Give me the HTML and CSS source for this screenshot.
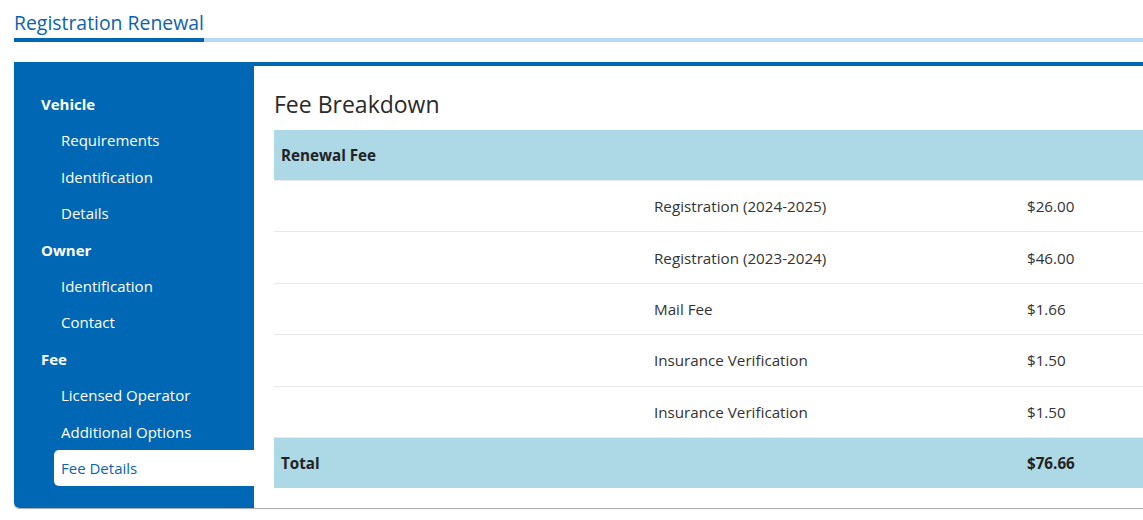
FILE: index.html
```html
<!DOCTYPE html>
<html lang="en">
<head>
<meta charset="utf-8">
<title>Registration Renewal</title>
<link rel="stylesheet" href="styles.css">
</head>
<body>
<div class="page-title">
  <h1 class="title">Registration Renewal</h1>
</div>
<div class="card">
  <nav class="sidebar">
    <ul class="nav">
      <li class="nav-group">Vehicle</li>
      <li class="nav-item">Requirements</li>
      <li class="nav-item">Identification</li>
      <li class="nav-item">Details</li>
      <li class="nav-group">Owner</li>
      <li class="nav-item">Identification</li>
      <li class="nav-item">Contact</li>
      <li class="nav-group">Fee</li>
      <li class="nav-item">Licensed Operator</li>
      <li class="nav-item">Additional Options</li>
      <li class="nav-item active">Fee Details</li>
    </ul>
  </nav>
  <main class="content">
    <h2 class="heading">Fee Breakdown</h2>
    <table class="fees">
      <colgroup><col class="c1"><col class="c2"><col class="c3"></colgroup>
      <thead>
        <tr class="head-row"><th>Renewal Fee</th><th></th><th></th></tr>
      </thead>
      <tbody>
        <tr><td></td><td>Registration (2024-2025)</td><td>$26.00</td></tr>
        <tr><td></td><td>Registration (2023-2024)</td><td>$46.00</td></tr>
        <tr><td></td><td>Mail Fee</td><td>$1.66</td></tr>
        <tr><td></td><td>Insurance Verification</td><td>$1.50</td></tr>
        <tr><td></td><td>Insurance Verification</td><td>$1.50</td></tr>
      </tbody>
      <tfoot>
        <tr class="total-row"><th>Total</th><th></th><th>$76.66</th></tr>
      </tfoot>
    </table>
  </main>
</div>
</body>
</html>
```
FILE: styles.css
```css
html, body {
  margin: 0;
  padding: 0;
  overflow: hidden;
  background: #fff;
}
body {
  font-family: "Open Sans", "Noto Sans", sans-serif;
  color: #333;
  width: 1143px;
  height: 520px;
}
.page-title {
  margin-left: 14px;
  padding-top: 10px;
  border-bottom: 4px solid #b8d8f8;
}
.title {
  display: inline-block;
  margin: 0 0 -4px 0;
  font-size: 19.4px;
  font-weight: 400;
  line-height: 26px;
  padding-bottom: 2px;
  width: 190px;
  white-space: nowrap;
  color: #0a63b1;
  border-bottom: 4px solid #0067b4;
}
.card {
  margin: 20px 0 0 14px;
  width: 1129px;
  height: 442px;
  overflow: hidden;
  border-top: 4px solid #0067b4;
  display: grid;
  grid-template-columns: 240px 1fr;
  box-shadow: 0 1px 1px rgba(0,0,0,0.35);
  border-bottom-left-radius: 5px;
}
.sidebar {
  background: #0067b4;
  border-bottom-left-radius: 5px;
  padding-top: 20px;
}
.nav {
  list-style: none;
  margin: 0;
  padding: 0;
}
.nav li {
  height: 36.4px;
  line-height: 36.4px;
  color: #fff;
  font-size: 15px;
  white-space: nowrap;
}
.nav-group {
  font-weight: 700;
  padding-left: 27px;
}
.nav-item {
  margin-left: 40px;
  padding-left: 7px;
}
.nav-item.active {
  background: #fff;
  color: #0a63b1;
  border-radius: 5px 0 0 5px;
}
.content {
  background: #fff;
  padding: 0 0 0 20px;
  overflow: hidden;
}
.heading {
  margin: 0;
  height: 64px;
  line-height: 76px;
  font-size: 23px;
  font-weight: 500;
  color: #2a2a2a;
}
.fees {
  border-collapse: collapse;
  width: 1119px;
  table-layout: fixed;
  font-size: 15.2px;
}
.c1, .c2, .c3 { width: 373px; }
.fees th, .fees td {
  text-align: left;
  padding: 0 7px;
}
.head-row th {
  background: #add8e6;
  height: 50px;
  font-weight: 700;
  color: #222;
}
.fees tbody td {
  height: 51.4px;
  border-top: 1px solid #e9e9e9;
  box-sizing: border-box;
}
.total-row th {
  background: #add8e6;
  height: 51px;
  font-weight: 700;
  color: #222;
  border-top: 1px solid #e9e9e9;
  box-sizing: border-box;
}
```
